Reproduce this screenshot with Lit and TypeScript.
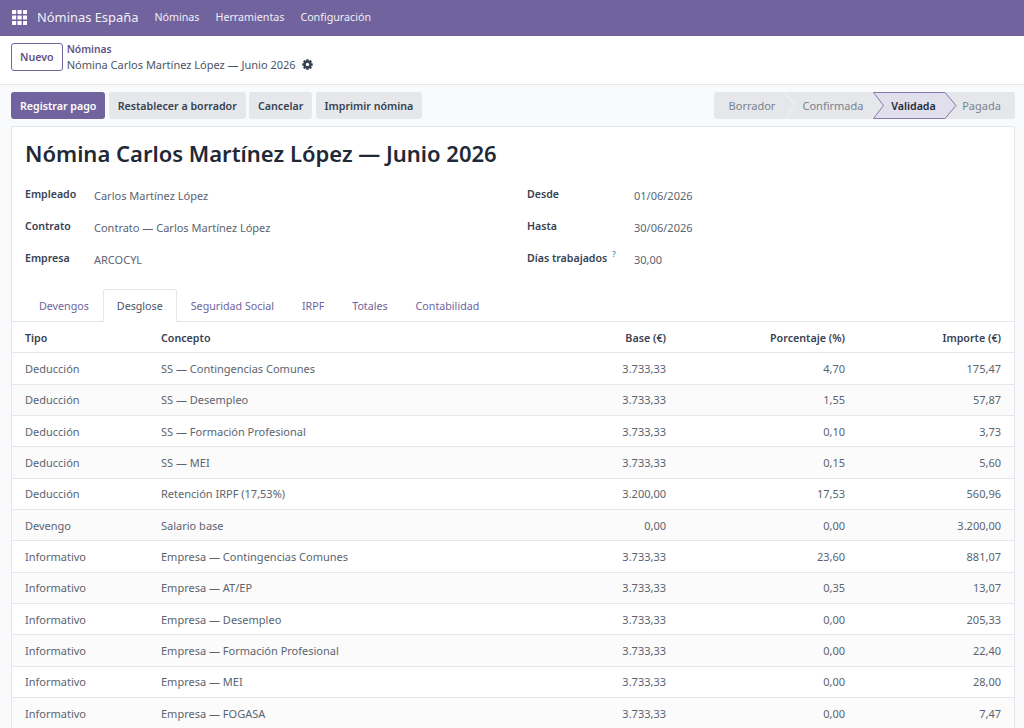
import { LitElement, html, css, svg } from "lit";
import { customElement } from "lit/decorators.js";

const ROWS = [
  ["Deducción", "SS — Contingencias Comunes", "3.733,33", "4,70", "175,47"],
  ["Deducción", "SS — Desempleo", "3.733,33", "1,55", "57,87"],
  ["Deducción", "SS — Formación Profesional", "3.733,33", "0,10", "3,73"],
  ["Deducción", "SS — MEI", "3.733,33", "0,15", "5,60"],
  ["Deducción", "Retención IRPF (17,53%)", "3.200,00", "17,53", "560,96"],
  ["Devengo", "Salario base", "0,00", "0,00", "3.200,00"],
  ["Informativo", "Empresa — Contingencias Comunes", "3.733,33", "23,60", "881,07"],
  ["Informativo", "Empresa — AT/EP", "3.733,33", "0,35", "13,07"],
  ["Informativo", "Empresa — Desempleo", "3.733,33", "0,00", "205,33"],
  ["Informativo", "Empresa — Formación Profesional", "3.733,33", "0,00", "22,40"],
  ["Informativo", "Empresa — MEI", "3.733,33", "0,00", "28,00"],
  ["Informativo", "Empresa — FOGASA", "3.733,33", "0,00", "7,47"],
];

const TABS = ["Devengos", "Desglose", "Seguridad Social", "IRPF", "Totales", "Contabilidad"];

const appsIcon = html`<svg class="apps" width="15" height="15" viewBox="0 0 15 15" fill="#fff">
  ${[0, 5.5, 11].map((y) =>
    [0, 5.5, 11].map((x) => svg`<rect x=${x} y=${y} width="4.2" height="4" rx="0.4"></rect>`)
  )}
</svg>`;

const gearIcon = html`<svg class="gear" width="11" height="11" viewBox="0 0 24 24" fill="#374151">
  ${[0, 45, 90, 135].map(
    (a) => svg`<rect x="9.2" y="0.5" width="5.6" height="23" rx="1.2" transform="rotate(${a} 12 12)"></rect>`
  )}
  <circle cx="12" cy="12" r="8.6"></circle>
  <circle cx="12" cy="12" r="3.6" fill="#fff"></circle>
</svg>`;

@customElement("app-root")
export class AppRoot extends LitElement {
  static styles = css`
    :host {
      display: block;
      height: 728px;
      overflow: hidden;
      background: #f9fafb;
      font-family: "Noto Sans", "Open Sans", sans-serif;
      font-size: 11px;
      color: #5b6470;
    }

    /* barra superior */
    .nav {
      height: 36px;
      box-sizing: border-box;
      padding: 0 0 2px 12px;
      background: #71639e;
      display: flex;
      align-items: center;
      color: #fff;
    }
    .apps {
      margin-right: 10px;
    }
    .brand {
      font-size: 12.9px;
      margin-right: 16px;
      opacity: 0.9;
    }
    .nav a {
      margin-right: 16px;
      font-size: 10.7px;
      opacity: 0.9;
    }

    /* cabecera */
    .head {
      height: 49px;
      box-sizing: border-box;
      background: #fff;
      border-bottom: 1px solid #e5e7eb;
      display: flex;
      align-items: center;
      padding: 0 0 7px 11px;
      gap: 4px;
    }
    .btn {
      box-sizing: border-box;
      height: 27px;
      display: flex;
      align-items: center;
      padding: 0 9px;
      border-radius: 3px;
      font-weight: 600;
      font-size: 10.65px;
      color: #374151;
      background: #e5e7eb;
      white-space: nowrap;
    }
    .btn.new {
      background: #fff;
      border: 1px solid #71639e;
      color: #5f5387;
      height: 28px;
      padding: 0 8px;
    }
    .btn.primary {
      background: #71639e;
      color: #fff;
    }
    .crumbs {
      line-height: 15px;
    }
    .crumbs .up {
      color: #5f5387;
      font-weight: 600;
      font-size: 10.3px;
    }
    .crumbs .cur {
      display: flex;
      align-items: center;
      gap: 6px;
      color: #4b5563;
    }

    /* acciones */
    .actions {
      height: 41px;
      display: flex;
      align-items: center;
      padding: 0 9px 0 11px;
      gap: 3.3px;
      box-sizing: border-box;
    }
    .status {
      margin-left: auto;
      height: 27px;
      display: flex;
      background: #e5e7eb;
      border-radius: 3px;
      color: #7b8390;
      position: relative;
    }
    .step {
      position: relative;
      box-sizing: border-box;
      display: flex;
      align-items: center;
      justify-content: center;
    }
    .step span {
      position: relative;
    }
    .step svg {
      position: absolute;
      top: 0;
      left: 0;
      height: 27px;
    }
    .step.on {
      color: #1f2937;
      font-weight: 600;
      font-size: 10.65px;
    }

    /* hoja */
    .sheet {
      margin: 0 9px 0 11px;
      background: #fff;
      border: 1px solid #e5e7eb;
      border-bottom: 0;
      border-radius: 3px 3px 0 0;
    }
    h1 {
      margin: 0;
      padding: 9px 13px 0;
      height: 45px;
      box-sizing: border-box;
      font-size: 22px;
      line-height: 35px;
      font-weight: 600;
      color: #1f2937;
      white-space: nowrap;
    }
    .fields {
      display: grid;
      grid-template-columns: 502px 1fr;
      padding: 13px 13px 0;
      height: 117px;
      box-sizing: border-box;
    }
    .group {
      display: grid;
      grid-auto-rows: 32px;
    }
    .group.left {
      grid-template-columns: 69px 1fr;
    }
    .group.right {
      grid-template-columns: 107px 1fr;
    }
    .lab {
      font-weight: 600;
      font-size: 10.6px;
      color: #374151;
      line-height: 18px;
    }
    .val {
      line-height: 22px;
    }
    .lab sup {
      color: #3b9bb8;
      font-size: 8px;
      line-height: 0;
      margin-left: 2px;
    }

    /* pestañas */
    .tabs {
      height: 32px;
      display: flex;
      padding-left: 13px;
      border-bottom: 1px solid #e5e7eb;
      font-size: 10.7px;
    }
    .tab {
      padding: 0 13px;
      line-height: 32px;
      color: #71639e;
      box-sizing: border-box;
      height: 33px;
      border: 1px solid transparent;
      border-bottom: 0;
    }
    .tab.on {
      color: #4b5563;
      background: #fff;
      border-color: #e5e7eb;
      border-radius: 3px 3px 0 0;
    }

    /* tabla */
    .row {
      display: grid;
      grid-template-columns: 136px 352px 179px 179px 156px;
      height: 31.36px;
      align-items: center;
      border-bottom: 1px solid #e5e7eb;
      box-sizing: border-box;
    }
    .row > div {
      padding: 0 13px;
    }
    .row.th {
      font-weight: 600;
      font-size: 10.7px;
      color: #374151;
      height: 31.2px;
      padding-top: 1px;
    }
    .row.alt {
      background: #fbfbfb;
    }
    .num {
      text-align: right;
    }
  `;

  // pad: desplaza la etiqueta hacia la punta del chevrón
  private step(label: string, width: number, pad: number, on = false, sep = true) {
    const h = 27;
    return html`<div class="step ${on ? "on" : ""}" style="width:${width}px;padding-left:${pad}px">
      ${on
        ? html`<svg width=${width + 12} viewBox="0 0 ${width + 12} ${h}">
            <polygon
              points="0.5,0.5 ${width},0.5 ${width + 11},13.5 ${width},26.5 0.5,26.5 10.5,13.5"
              fill="#e2dfec"
              stroke="#8679ae"
            ></polygon>
          </svg>`
        : sep
          ? html`<svg width="12" viewBox="0 0 12 ${h}">
              <polyline points="0,0 10,13.5 0,27" fill="none" stroke="#f3f4f6" stroke-width="1"></polyline>
            </svg>`
          : ""}
      <span>${label}</span>
    </div>`;
  }

  render() {
    return html`
      <div class="nav">
        ${appsIcon}
        <span class="brand">Nóminas España</span>
        <a>Nóminas</a><a>Herramientas</a><a>Configuración</a>
      </div>

      <div class="head">
        <div class="btn new">Nuevo</div>
        <div class="crumbs">
          <div class="up">Nóminas</div>
          <div class="cur">Nómina Carlos Martínez López — Junio 2026 ${gearIcon}</div>
        </div>
      </div>

      <div class="actions">
        <div class="btn primary">Registrar pago</div>
        <div class="btn">Restablecer a borrador</div>
        <div class="btn">Cancelar</div>
        <div class="btn">Imprimir nómina</div>
        <div class="status">
          ${this.step("Borrador", 71, 5, false, false)}
          ${this.step("Confirmada", 88, 8)}
          ${this.step("Validada", 72, 9, true)}
          ${this.step("Pagada", 70, 3, false, false)}
        </div>
      </div>

      <div class="sheet">
        <h1>Nómina Carlos Martínez López — Junio 2026</h1>
        <div class="fields">
          <div class="group left">
            <div class="lab">Empleado</div><div class="val">Carlos Martínez López</div>
            <div class="lab">Contrato</div><div class="val">Contrato — Carlos Martínez López</div>
            <div class="lab">Empresa</div><div class="val">ARCOCYL</div>
          </div>
          <div class="group right">
            <div class="lab">Desde</div><div class="val">01/06/2026</div>
            <div class="lab">Hasta</div><div class="val">30/06/2026</div>
            <div class="lab">Días trabajados <sup>?</sup></div><div class="val">30,00</div>
          </div>
        </div>

        <div class="tabs">
          ${TABS.map((t) => html`<div class="tab ${t === "Desglose" ? "on" : ""}">${t}</div>`)}
        </div>

        <div class="row th">
          <div>Tipo</div><div>Concepto</div>
          <div class="num">Base (€)</div><div class="num">Porcentaje (%)</div><div class="num">Importe (€)</div>
        </div>
        ${ROWS.map(
          (r, i) => html`<div class="row ${i % 2 ? "alt" : ""}">
            <div>${r[0]}</div><div>${r[1]}</div>
            <div class="num">${r[2]}</div><div class="num">${r[3]}</div><div class="num">${r[4]}</div>
          </div>`
        )}
      </div>
    `;
  }
}
